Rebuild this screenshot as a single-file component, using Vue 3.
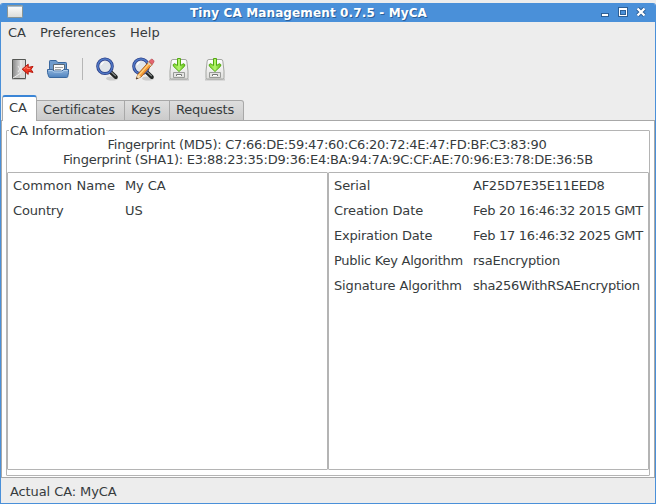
<script setup>
const tabs = [
  { name: 'Certificates', cls: 'certs' },
  { name: 'Keys', cls: 'keys' },
  { name: 'Requests', cls: 'reqs' },
]
const subject = [
  ['Common Name', 'My CA', 'cn'],
  ['Country', 'US', 'country'],
]
const details = [
  ['Serial', 'AF25D7E35E11EED8', 'serial'],
  ['Creation Date', 'Feb 20 16:46:32 2015 GMT', 'creation'],
  ['Expiration Date', 'Feb 17 16:46:32 2025 GMT', 'expiry'],
  ['Public Key Algorithm', 'rsaEncryption', 'pubkey'],
  ['Signature Algorithm', 'sha256WithRSAEncryption', 'sig'],
]
</script>

<template>
  <div class="desktop">
    <div class="window">
      <header class="titlebar">
        <svg class="appicon" width="16" height="13" viewBox="0 0 16 13">
          <defs>
            <linearGradient id="winicon" x2="0" y2="1"><stop offset="0" stop-color="#fff" /><stop offset="1" stop-color="#dcdcd8" /></linearGradient>
          </defs>
          <rect x=".5" y=".5" width="15" height="12" rx=".8" fill="url(#winicon)" stroke="#8b9695" />
          <path d="M1 1.5h14" stroke="#a7bccf" />
        </svg>
        <span class="title">Tiny CA Management 0.7.5 - MyCA</span>
        <svg class="controls" width="48" height="14" viewBox="0 0 48 14">
          <g shape-rendering="crispEdges">
            <path d="M1 8h8v4H1zM18 2h10v10H18z" fill="#2c5f97" />
            <path d="M2 9h6v2H2zM19 3h8v8h-8z" fill="#fff" />
            <path d="M20 5h6v5h-6z" fill="#2c5f97" /><path d="M21 6h4v3h-4z" fill="#4a90d9" />
          </g>
          <path d="m37.5 3.5 7 7m0-7-7 7" stroke="#2c5f97" stroke-width="4" />
          <path d="m37.5 3.5 7 7m0-7-7 7" stroke="#fff" stroke-width="2.3" />
        </svg>
      </header>

      <nav class="menu">
        <span class="m-ca">CA</span><span class="m-pref">Preferences</span><span>Help</span>
      </nav>

      <div class="toolbar">
        <svg width="24" height="24" viewBox="0 0 24 24">
          <defs>
            <linearGradient id="door" x2="1"><stop offset="0" stop-color="#8c8c8c" /><stop offset="1" stop-color="#dedede" /></linearGradient>
          </defs>
          <path d="M2 22.5h14" stroke="#c8c8c8" />
          <path d="M2.5 2.5h13v19h-13z" fill="#c4c4c2" stroke="#555754" />
          <path d="M10 3h5v18h-5z" fill="#d9d9d7" />
          <path d="M3 3h8v13L4 21H3z" fill="url(#door)" />
          <path d="m3 21 8-5V3M8 9l2 3-2 3" stroke="#eee" fill="none" />
          <path d="m12.2 12.2 6-5v3.2l4.8-1-2 3 2 3-4.8-1v3z" fill="#ef3a24" stroke="#b8170c" stroke-linejoin="round" />
          <path d="m14 12 3-2.5v2h3" fill="none" stroke="#ff8068" />
        </svg>
        <svg width="24" height="24" viewBox="0 0 24 24">
          <defs>
            <linearGradient id="folder" x2="0" y2="1"><stop offset="0" stop-color="#8fb4dd" /><stop offset="1" stop-color="#4f83bf" /></linearGradient>
          </defs>
          <path d="M3.5 13V4.2q0-.7.7-.7h6l1.5 2h8q.8 0 .8.8V14z" fill="#6f9bcc" stroke="#3a689f" />
          <path d="M7.5 7.5h11V15h-11z" fill="#fafafa" stroke="#5b6670" />
          <path d="M9 10.5h8m-8 2h6" stroke="#a0a3a4" />
          <path d="M1.5 12.5h5L8 14h8l1.5-1.5h5v3.2l-.8 4q-.2.8-1 .8H3.7q-.8 0-1-.8l-1.2-4z" fill="url(#folder)" stroke="#3a689f" />
          <path d="M2.5 13.5h3.7L7.7 15h8.6l1.5-1.5h3.7" fill="none" stroke="#b3cfec" />
        </svg>
        <i class="sep"></i>
        <svg v-for="edit in [false, true]" :key="edit" width="24" height="24" viewBox="0 0 24 24">
          <ellipse cx="17" cy="21.5" rx="6" ry="2" fill="#b6b6b6" opacity=".6" />
          <path d="m15.8 15.2 5 4.8" stroke="#222524" stroke-width="4" stroke-linecap="round" />
          <path d="m16 14.7 4.8 4.4" stroke="#8c9191" stroke-width="1.2" />
          <circle cx="10" cy="9.3" r="7.3" fill="#e0e5e9" stroke="#2b3d86" stroke-width="3" />
          <circle cx="10" cy="9.3" r="7.3" fill="none" stroke="#5079c6" stroke-width="1.5" />
          <path d="M5.5 9q0-4 4.2-4.5Q7.3 7.5 5.5 9" fill="#fff" />
          <g v-if="edit">
            <path d="M5.2 22 7 17 18 4.5l3.2 3L10 20z" fill="#f49a36" stroke="#a85b1a" stroke-width=".9" />
            <path d="m8 18 10.7-12" stroke="#ffd17d" stroke-width="1.3" />
            <path d="m18 4.5 1.8-2q1-.8 2.2.2t1 2.2l-1.8 2.6z" fill="#e56570" stroke="#b94a52" stroke-width=".7" />
            <path d="m17 5.6 3.2 3" stroke="#d1d2d0" stroke-width="1.4" />
            <path d="M5.2 22 7 17l3 3z" fill="#f4ddb3" /><path d="m5 22.2.8-2 1.3 1.2z" fill="#222" />
          </g>
        </svg>
        <svg v-for="n in 2" :key="n" width="24" height="24" viewBox="0 0 24 24">
          <defs>
            <linearGradient :id="'drive' + n" x2="0" y2="1"><stop offset="0" stop-color="#fff" /><stop offset="1" stop-color="#dededc" /></linearGradient>
            <linearGradient :id="'arrow' + n" x2="1"><stop offset="0" stop-color="#7bd527" /><stop offset=".5" stop-color="#b5f56f" /><stop offset="1" stop-color="#5fc112" /></linearGradient>
          </defs>
          <path d="M2 22.5h20" stroke="#c6c6c6" stroke-width="2" />
          <path d="M6 2.5h12q1.7 0 1.8 1.6l1.2 10v6.4q0 1.5-1.5 1.5h-15q-1.5 0-1.5-1.5v-6.4l1.2-10q.1-1.6 1.8-1.6z" :fill="`url(#drive${n})`" stroke="#a3a5a1" />
          <path d="M6.5 15.5h11v5h-11z" fill="#e4e4e2" stroke="#999b98" />
          <path d="M9.5 19v-1.5h5V19" fill="#fff" stroke="#747774" />
          <path d="M10.5 1.5h3v7l3-1.8q2 .5 1.2 2.4L12 14.5 6.3 9.1Q5.5 7.2 7.5 6.7l3 1.8z" :fill="`url(#arrow${n})`" stroke="#52a911" />
        </svg>
      </div>

      <div class="tabs">
        <div class="tab active"><span>CA</span></div>
        <div v-for="t in tabs" :key="t.name" class="tab" :class="t.cls"><span>{{ t.name }}</span></div>
      </div>

      <main class="page">
        <fieldset class="frame">
          <legend>CA Information</legend>
          <div class="prints">
            <div class="md5">Fingerprint (MD5): C7:66:DE:59:47:60:C6:20:72:4E:47:FD:BF:C3:83:90</div>
            <div class="sha">Fingerprint (SHA1): E3:88:23:35:D9:36:E4:BA:94:7A:9C:CF:AE:70:96:E3:78:DE:36:5B</div>
          </div>
          <div class="panes">
            <div class="pane left">
              <div v-for="r in subject" :key="r[0]" class="row" :class="r[2]"><span class="label">{{ r[0] }}</span><span class="value">{{ r[1] }}</span></div>
            </div>
            <div class="pane right">
              <div v-for="r in details" :key="r[0]" class="row" :class="r[2]"><span class="label">{{ r[0] }}</span><span class="value">{{ r[1] }}</span></div>
            </div>
          </div>
        </fieldset>
      </main>

      <footer class="status">Actual CA: MyCA</footer>
    </div>
  </div>
</template>

<style>
html, body { background: #ededed; }
</style>

<style scoped>
* { box-sizing: border-box; }
.desktop { width: 656px; height: 504px; padding-top: 3px; background: #ededed; overflow: hidden; font: 13px/15px "DejaVu Sans", sans-serif; color: #363b3d; white-space: nowrap; }
.window { display: flex; flex-direction: column; height: 501px; border: 1px solid #4a90d9; border-top: 0; border-radius: 3px 3px 0 0; overflow: hidden; }
.titlebar { display: flex; align-items: flex-start; height: 19px; padding: 2px 7px 0 6px; background: #4a90d9; flex: none; }
.appicon { flex: none; }
.title { flex: 1; padding: 1px 0 0 167px; color: #fff; font-size: 12px; letter-spacing: .13px; font-weight: bold; text-shadow: 1px 1px 0 #2c5f97; }
.controls { flex: none; }
.menu { display: flex; height: 26px; padding: 3px 0 0 7px; flex: none; }
.m-ca { width: 32px; }
.m-pref { width: 90px; letter-spacing: -.08px; }
.toolbar { display: flex; height: 47px; padding: 9px 0 0 9px; gap: 12px; flex: none; }
.sep { width: 1px; height: 22px; margin: 1px 0; background: #b6b6b6; }
.tabs { display: flex; align-items: flex-end; height: 26px; padding-left: 1px; flex: none; margin-bottom: -1px; z-index: 1; }
.tab { height: 21px; padding-top: 1px; border: 1px solid #a8a8a8; border-left: 0; background: linear-gradient(#dedede, #cbcbcb); }
.tab.active { width: 35px; height: 26px; padding: 3px 0 0 6px; border-top: 2px solid #3b85d6; border-bottom: 0; border-left: 1px solid #a8a8a8; border-radius: 3px 3px 0 0; background: #fff; }
.certs { width: 88px; padding-left: 6px; letter-spacing: -.2px; }
.keys { width: 45px; padding-left: 6px; letter-spacing: -.2px; }
.reqs { width: 74px; padding-left: 6px; letter-spacing: -.2px; border-top-right-radius: 3px; }
.page { height: 358px; padding: 1px 4px 0; border: 1px solid #a8a8a8; background: #fff; flex: none; }
.frame { display: flex; flex-direction: column; width: 644px; height: 354px; margin: 0; padding: 0; border: 1px solid #b4b4b4; border-radius: 1px; }
legend { margin-left: 2px; padding: 1px 1px 0; height: 16px; letter-spacing: -.15px; }
.prints { height: 35px; margin-top: -1px; text-align: center; flex: none; }
.md5 { padding-right: 2px; letter-spacing: -.275px; }
.sha { letter-spacing: -.23px; }
.panes { display: flex; height: 298px; }
.pane { width: 321px; padding: 5px 5px; border: 1px solid #b4b4b4; border-radius: 1px; }
.row { display: flex; height: 25px; }
.label { flex: none; }
.left .label { width: 112px; }
.right .label { width: 139px; }
.cn .label { letter-spacing: .1px; }
.cn .value { letter-spacing: -.1px; }
.country .label { letter-spacing: -.15px; }
.serial .label { letter-spacing: -.1px; }
.creation .label { letter-spacing: -.08px; }
.expiry .label { letter-spacing: -.2px; }
.pubkey .label { letter-spacing: -.25px; }
.sig .label { letter-spacing: -.14px; }
.serial .value { letter-spacing: -.25px; }
.creation .value, .expiry .value { letter-spacing: -.29px; }
.pubkey .value { letter-spacing: -.23px; }
.sig .value { letter-spacing: -.3px; }
.status { padding: 6px 0 0 9px; letter-spacing: -.1px; }
</style>
